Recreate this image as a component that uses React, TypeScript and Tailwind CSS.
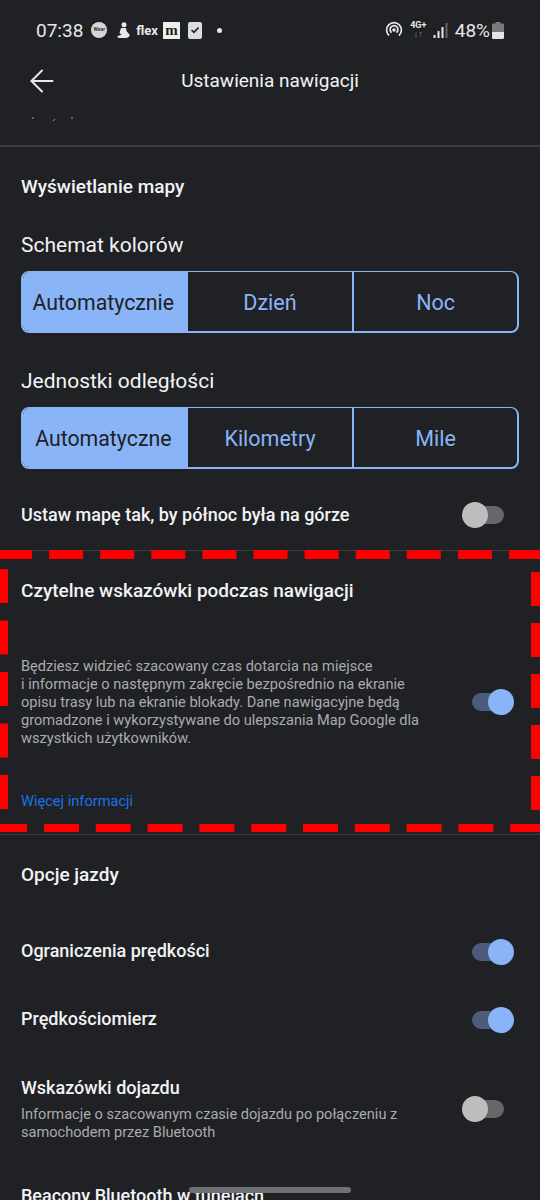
import { ArrowLeft } from 'lucide-react';

const font = { fontFamily: '"Roboto", "Liberation Sans", sans-serif' };

function Toggle({ on }: { on?: boolean }) {
  return (
    <div className="relative h-[26px] w-[42px] shrink-0">
      <div className={`absolute top-1 left-[10px] h-[18px] w-8 rounded-full ${on ? 'bg-[#4c5b7c]' : 'bg-[#66676a]'}`} />
      <div className={`absolute top-0 h-[26px] w-[26px] rounded-full ${on ? 'left-[26px] bg-[#8ab4f8]' : 'left-0 bg-[#bdbdbd]'}`} />
    </div>
  );
}

function Segmented({ items }: { items: string[] }) {
  return (
    <div className="mx-[21px] grid h-[62px] grid-cols-3 overflow-hidden rounded-lg border-2 border-t border-[#8ab4f8]">
      <div className="flex items-center justify-center bg-[#8ab4f8] pt-[3px] pr-1 text-[21.3px] text-[#202124]">{items[0]}</div>
      <div className="flex items-center justify-center pt-[3px] text-[21.5px] text-[#8ab4f8]">{items[1]}</div>
      <div className="flex items-center justify-center border-l-2 border-[#8ab4f8] pt-[3px] text-[21.5px] text-[#8ab4f8]">{items[2]}</div>
    </div>
  );
}

function StatusBar() {
  return (
    <div className="flex h-[60px] items-center justify-between px-[36px] text-[#e8e8e8]">
      <div className="flex items-center">
        <span className="text-[19px] leading-none">07:38</span>
        <span className="ml-2 flex h-4 w-4 items-center justify-center rounded-full bg-[#d6d6d6] text-[5px] font-bold text-[#333]">Wear</span>
        <svg className="ml-[9px]" width="14" height="16" viewBox="0 0 14 16">
          <circle cx="8" cy="2.800" r="2.500" fill="#e8e8e8" />
          <path d="M5 6h5l.5 3 3 3.500c.5 2-1.500 3.500-4.500 3.500H2.500L1 14.500l4.500-2-2-1.500z" fill="#e8e8e8" />
        </svg>
        <span className="ml-[6px] text-[13px] leading-none font-bold">flex</span>
        <span className="ml-[5px] flex h-[17px] w-[17px] items-center justify-center bg-[#eeeeee] text-[15px] leading-none font-bold text-[#202124]" style={{ fontFamily: '"Liberation Serif", serif' }}>m</span>
        <span className="ml-2 flex h-[17px] w-[14px] items-center justify-center rounded-[2px] bg-[#dcdcdc]">
          <svg width="10" height="10" viewBox="0 0 10 10">
            <path d="M1.500 5l2.400 2.400L8.500 2.600" fill="none" stroke="#202124" strokeWidth="1.600" />
          </svg>
        </span>
        <span className="ml-[15px] h-[5px] w-[5px] rounded-full bg-[#e8e8e8]" />
      </div>
      <div className="flex items-center">
        <svg width="18" height="18" viewBox="0 0 18 18" fill="none" stroke="#e8e8e8" strokeWidth="1.700">
          <path d="M4 14.500a7.400 7.400 0 1 1 10 0" />
          <path d="M6.600 11.600a3.900 3.900 0 1 1 4.800 0" />
          <circle cx="9" cy="9" r="0.900" fill="#e8e8e8" />
        </svg>
        <span className="ml-2 flex w-[15px] flex-col items-center leading-none">
          <span className="text-[9px] leading-[9px] font-bold">4G+</span>
          <span className="text-[9px] leading-[9px] font-bold text-[#8d8d8d]">↓↑</span>
        </span>
        <svg className="ml-[7px]" width="15" height="15" viewBox="0 0 15 15">
          <rect x="0.500" y="12" width="2" height="3" fill="#e8e8e8" />
          <rect x="4.500" y="8" width="2" height="7" fill="#e8e8e8" />
          <rect x="8.500" y="4" width="2" height="11" fill="#e8e8e8" />
          <rect x="12.500" y="0" width="2" height="15" fill="#66676a" />
        </svg>
        <span className="ml-[7px] text-[19px] leading-none">48%</span>
        <svg className="ml-[2px]" width="12" height="17" viewBox="0 0 12 17">
          <path d="M3.500 0h5v1.500H11a1 1 0 0 1 1 1V10H0V2.500a1 1 0 0 1 1-1h2.500z" fill="#7a7a7a" />
          <path d="M0 10h12v5.500a1.500 1.500 0 0 1-1.500 1.500h-9A1.500 1.500 0 0 1 0 15.500z" fill="#e4e4e4" />
        </svg>
      </div>
    </div>
  );
}

export default function App() {
  return (
    <div className="relative h-[1200px] w-[540px] overflow-hidden bg-[#202124]" style={font}>
      <StatusBar />

      {/* Toolbar */}
      <div className="relative flex h-[42px] items-center justify-center">
        <ArrowLeft className="absolute left-[24px] text-[#e8eaed]" size={36} strokeWidth={1.300} />
        <h1 className="text-[19px] text-[#f1f3f4]">Ustawienia nawigacji</h1>
      </div>

      {/* scrolled-away row */}
      <div className="h-[43px] pt-[14px] pl-[32px]">
        <svg width="44" height="6" viewBox="0 0 44 6">
          <path d="M0 2h2M23 3l-2 2M39 2h2" stroke="#9a9b9d" strokeWidth="1" />
        </svg>
      </div>
      <div className="h-[2px] bg-[#3c3d40]" />

      {/* Map display */}
      <h2 className="mt-[28px] px-[21px] text-[19px] leading-6 font-medium text-[#f1f3f4]">Wyświetlanie mapy</h2>
      <h3 className="mt-[33px] mb-[13px] px-[21px] text-[21px] leading-[26px] text-[#f1f3f4]">Schemat kolorów</h3>
      <Segmented items={['Automatycznie', 'Dzień', 'Noc']} />
      <h3 className="mt-[35px] mb-[13px] px-[21px] text-[21px] leading-[26px] text-[#f1f3f4]">Jednostki odległości</h3>
      <Segmented items={['Automatyczne', 'Kilometry', 'Mile']} />

      <div className="mt-[33px] flex h-[26px] items-center justify-between pr-[36px] pl-[21px]">
        <span className="-mt-[2px] text-[18px] font-medium text-[#f1f3f4]">Ustaw mapę tak, by północ była na górze</span>
        <Toggle />
      </div>
      <div className="mt-[22px] h-px bg-[#3c3d40]" />

      {/* Readable directions */}
      <h2 className="mt-[28px] px-[21px] text-[19px] leading-6 font-medium text-[#f1f3f4]">Czytelne wskazówki podczas nawigacji</h2>
      <div className="mt-[54px] flex items-center justify-between pr-[36px] pl-[21px]">
        <p className="w-[410px] text-[14.600px] leading-[18px] text-[#a9abae]">
          Będziesz widzieć szacowany czas dotarcia na miejsce
          <br />
          i informacje o następnym zakręcie bezpośrednio na ekranie
          <br />
          opisu trasy lub na ekranie blokady. Dane nawigacyjne będą
          <br />
          gromadzone i wykorzystywane do ulepszania Map Google dla
          <br />
          wszystkich użytkowników.
        </p>
        <Toggle on />
      </div>
      <a className="mt-[45px] block px-[21px] text-[14.600px] leading-[18px] text-[#1a73e8]">Więcej informacji</a>
      <div className="mt-6 h-px bg-[#3c3d40]" />

      {/* Driving options */}
      <h2 className="mt-[28px] px-[21px] text-[19px] leading-6 font-medium text-[#f1f3f4]">Opcje jazdy</h2>
      <div className="mt-[52px] flex h-[26px] items-center justify-between pr-[36px] pl-[21px]">
        <span className="-mt-[3px] text-[18px] font-medium text-[#f1f3f4]">Ograniczenia prędkości</span>
        <Toggle on />
      </div>
      <div className="mt-[42px] flex h-[26px] items-center justify-between pr-[36px] pl-[21px]">
        <span className="-mt-[3px] text-[18px] font-medium text-[#f1f3f4]">Prędkościomierz</span>
        <Toggle on />
      </div>
      <div className="mt-[43px] flex items-center justify-between pr-[36px] pl-[21px]">
        <div>
          <div className="text-[18px] leading-[24px] font-medium text-[#f1f3f4]">Wskazówki dojazdu</div>
          <p className="mt-[5px] mb-px text-[14.600px] leading-[18px] text-[#a9abae]">
            Informacje o szacowanym czasie dojazdu po połączeniu z
            <br />
            samochodem przez Bluetooth
          </p>
        </div>
        <Toggle />
      </div>
      <div className="mt-[42px] px-[21px] text-[18px] leading-[24px] font-medium text-[#f1f3f4]">Beacony Bluetooth w tunelach</div>

      {/* Gesture handle */}
      <div className="absolute bottom-[7px] left-[189px] h-[6px] w-[162px] rounded-full bg-[#6f7075]" />

      {/* Red dashed annotation */}
      <svg className="absolute top-0 left-0" width="540" height="1200" fill="none" stroke="#ff0000" strokeWidth="8">
        <path d="M-2 554.500H540" strokeWidth="9" strokeDasharray="34 17.100" />
        <path d="M44 828H540" strokeDasharray="35 16.800" />
        <path d="M-8 828H27" />
        <path d="M4 569V820" strokeDasharray="34 17.500" />
        <path d="M535.500 572V820" strokeWidth="9" strokeDasharray="34 17" />
      </svg>
    </div>
  );
}
